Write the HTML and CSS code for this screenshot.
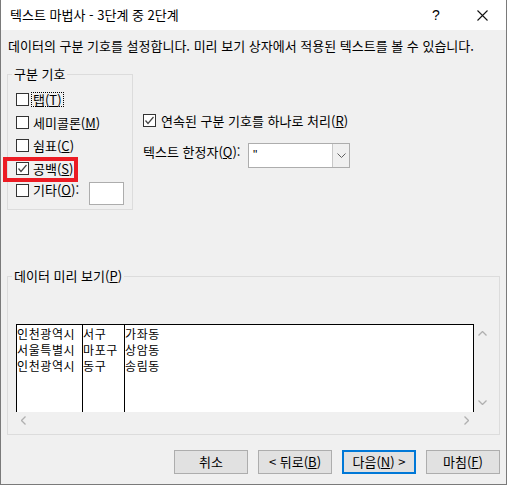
FILE: index.html
```html
<!DOCTYPE html>
<html lang="ko">
<head>
<meta charset="utf-8">
<title>텍스트 마법사</title>
<link rel="stylesheet" href="styles.css">
</head>
<body>
<div class="window">
  <div class="titlebar">
    <span class="title">텍스트 마법사 - 3단계 중 2단계</span>
    <span class="tb-help">?</span>
    <span class="tb-close"><svg width="11" height="11" viewBox="0 0 11 11"><path d="M0.5 0.5 L10.5 10.5 M10.5 0.5 L0.5 10.5" stroke="#111" stroke-width="1.1" fill="none"/></svg></span>
  </div>
  <div class="body">
    <p class="desc">데이터의 구분 기호를 설정합니다. 미리 보기 상자에서 적용된 텍스트를 볼 수 있습니다.</p>
    <div class="options">
      <div class="group delims">
        <div class="legend">구분 기호</div>
        <div class="rows">
          <div class="check-row"><span class="cb"></span><span class="lbl focus">탭(<u>T</u>)</span></div>
          <div class="check-row"><span class="cb"></span><span class="lbl">세미콜론(<u>M</u>)</span></div>
          <div class="check-row"><span class="cb"></span><span class="lbl">쉼표(<u>C</u>)</span></div>
          <div class="check-row marked"><span class="cb"><svg width="11" height="11" viewBox="0 0 11 11"><path d="M1.5 5.5 L4 8.5 L9.5 2" stroke="#444" stroke-width="1.2" fill="none"/></svg></span><span class="lbl">공백(<u>S</u>)</span><span class="highlight"></span></div>
          <div class="check-row other"><span class="cb"></span><span class="lbl lbl-other">기타(<u>O</u>):</span><span class="textbox"></span></div>
        </div>
      </div>
      <div class="right-opts">
        <div class="check-row consecutive"><span class="cb"><svg width="11" height="11" viewBox="0 0 11 11"><path d="M1.5 5.5 L4 8.5 L9.5 2" stroke="#444" stroke-width="1.2" fill="none"/></svg></span><span class="lbl">연속된 구분 기호를 하나로 처리(<u>R</u>)</span></div>
        <div class="qualifier-row">
          <span class="q-label">텍스트 한정자(<u>Q</u>):</span>
          <div class="combo">
            <span class="combo-val">"</span>
            <span class="combo-btn"><svg width="9" height="5" viewBox="0 0 9 5"><path d="M0.5 0.5 L4.5 4.5 L8.5 0.5" stroke="#606060" stroke-width="1" fill="none"/></svg></span>
          </div>
        </div>
      </div>
    </div>
    <div class="group preview">
      <div class="legend">데이터 미리 보기(<u>P</u>)</div>
      <div class="scroller">
        <div class="data">
          <div class="col c1"><div>인천광역시</div><div>서울특별시</div><div>인천광역시</div></div>
          <div class="col c2"><div>서구</div><div>마포구</div><div>동구</div></div>
          <div class="col c3"><div>가좌동</div><div>상암동</div><div>송림동</div></div>
        </div>
        <div class="vscroll">
          <svg width="9" height="5" viewBox="0 0 9 5"><path d="M0.5 4.5 L4.5 0.5 L8.5 4.5" stroke="#b0b0b0" stroke-width="1.3" fill="none"/></svg>
          <svg width="9" height="5" viewBox="0 0 9 5"><path d="M0.5 0.5 L4.5 4.5 L8.5 0.5" stroke="#b0b0b0" stroke-width="1.3" fill="none"/></svg>
        </div>
        <div class="hscroll">
          <svg width="5" height="9" viewBox="0 0 5 9"><path d="M4.5 0.5 L0.5 4.5 L4.5 8.5" stroke="#b0b0b0" stroke-width="1.3" fill="none"/></svg>
          <svg width="5" height="9" viewBox="0 0 5 9"><path d="M0.5 0.5 L4.5 4.5 L0.5 8.5" stroke="#b0b0b0" stroke-width="1.3" fill="none"/></svg>
        </div>
        <div class="corner"></div>
      </div>
    </div>
    <div class="buttons">
      <button class="btn">취소</button>
      <button class="btn">&lt; 뒤로(<u>B</u>)</button>
      <button class="btn default">다음(<u>N</u>) &gt;</button>
      <button class="btn">마침(<u>F</u>)</button>
    </div>
  </div>
</div>
</body>
</html>
```
FILE: styles.css
```css
html, body {
  margin: 0;
  padding: 0;
  background: #ffffff;
}
body {
  font-family: "Noto Sans CJK KR", "Noto Sans", sans-serif;
  font-size: 13px;
  line-height: 16px;
  color: #000;
}
.window {
  width: 507px;
  height: 485px;
  box-sizing: border-box;
  border: 1px solid #7a7a7a;
  border-top: none;
  display: flex;
  flex-direction: column;
  overflow: hidden;
}
.titlebar {
  height: 30px;
  flex: none;
  background: #ffffff;
  display: flex;
  align-items: center;
  padding-left: 9px;
}
.title {
  flex: 1;
}
.tb-help {
  width: 20px;
  text-align: center;
  font-family: "Liberation Sans", sans-serif;
  font-size: 14px;
  margin-right: 31px;
  margin-top: -1px;
}
.tb-close {
  width: 11px;
  height: 11px;
  margin-right: 18px;
  display: flex;
}
.body {
  flex: 1;
  background: #f0f0f0;
  position: relative;
}
.desc {
  margin: 8px 0 0 7px;
  white-space: nowrap;
}
.options {
  display: flex;
  margin-top: 20px;
  margin-left: 6px;
}
.group {
  border: 1px solid #dcdcdc;
  box-sizing: border-box;
}
.legend {
  width: fit-content;
  margin: -9px 0 0 4px;
  padding: 0 2px;
  background: #f0f0f0;
  line-height: 16px;
  height: 16px;
  white-space: nowrap;
}
.delims {
  width: 126px;
  height: 136px;
  flex: none;
}
.rows {
  padding-top: 6px;
}
.check-row {
  height: 23px;
  display: flex;
  align-items: center;
  padding-left: 8px;
  position: relative;
}
.cb {
  width: 13px;
  height: 13px;
  box-sizing: border-box;
  border: 1px solid #333;
  background: #fff;
  flex: none;
  display: flex;
  align-items: center;
  justify-content: center;
}
.cb svg {
  display: block;
}
.lbl {
  margin-left: 2px;
  padding: 0 1px;
  border: 1px dotted transparent;
  line-height: 13px;
  white-space: nowrap;
}
.lbl.focus {
  border-color: #000;
}
.check-row.other {
  align-items: flex-start;
  height: 26px;
}
.check-row.other .cb {
  margin-top: 4px;
}
.check-row.other .lbl {
  margin-top: 2px;
  line-height: 14px;
}
.lbl-other {
  width: 56px;
  box-sizing: border-box;
}
.textbox {
  width: 35px;
  height: 23px;
  margin-left: 2px;
  margin-top: 2px;
  box-sizing: border-box;
  border: 1px solid #adadad;
  background: #fff;
}
.highlight {
  position: absolute;
  left: -5px;
  top: 0;
  width: 75px;
  height: 25px;
  box-sizing: border-box;
  border: 4px solid #ec1c24;
}
.right-opts {
  margin-left: 10px;
  padding-top: 38px;
}
.check-row.consecutive {
  padding-left: 0;
  height: 16px;
}
.check-row.consecutive .lbl {
  margin-left: 3px;
}
.qualifier-row {
  display: flex;
  align-items: flex-start;
  margin-top: 15px;
}
.q-label {
  width: 105px;
  margin-top: 1px;
  white-space: nowrap;
}
.combo {
  width: 102px;
  height: 25px;
  box-sizing: border-box;
  border: 1px solid #adadad;
  background: #fff;
  display: flex;
}
.combo-val {
  flex: 1;
  padding-left: 4px;
  line-height: 22px;
  font-family: "Liberation Sans", sans-serif;
  font-size: 12px;
}
.combo-btn {
  width: 16px;
  border-left: 1px solid #c8c8c8;
  background: #f0f0f0;
  display: flex;
  align-items: center;
  justify-content: center;
}
.preview {
  width: 493px;
  height: 159px;
  margin: 66px 0 0 6px;
}
.scroller {
  display: grid;
  grid-template-columns: 458px 17px;
  grid-template-rows: 88px 17px;
  margin: 40px 0 0 8px;
}
.data {
  border: 1px solid #000;
  border-bottom: none;
  background: #fff;
  display: flex;
  overflow: hidden;
}
.col {
  padding-top: 1px;
  white-space: nowrap;
  line-height: 16px;
  font-size: 12px;
  letter-spacing: 0.6px;
  overflow: hidden;
}
.c1 {
  width: 65px;
  border-right: 1px solid #000;
  flex: none;
}
.c2 {
  width: 41px;
  border-right: 1px solid #000;
  flex: none;
}
.c3 {
  flex: 1;
}
.vscroll {
  display: flex;
  flex-direction: column;
  justify-content: space-between;
  align-items: center;
  padding: 7px 0;
}
.vscroll svg, .hscroll svg {
  display: block;
}
.hscroll {
  display: flex;
  justify-content: space-between;
  align-items: center;
  padding: 0 5px;
}
.buttons {
  display: flex;
  justify-content: flex-end;
  gap: 10px;
  margin-top: 15px;
  padding-right: 6px;
}
.btn {
  width: 74px;
  height: 24px;
  box-sizing: border-box;
  border: 1px solid #adadad;
  background: #e1e1e1;
  font-family: "Noto Sans CJK KR", "Noto Sans", sans-serif;
  font-size: 13px;
  line-height: 16px;
  color: #000;
  padding: 0;
}
.btn.default {
  border: 2px solid #0078d7;
}
```
